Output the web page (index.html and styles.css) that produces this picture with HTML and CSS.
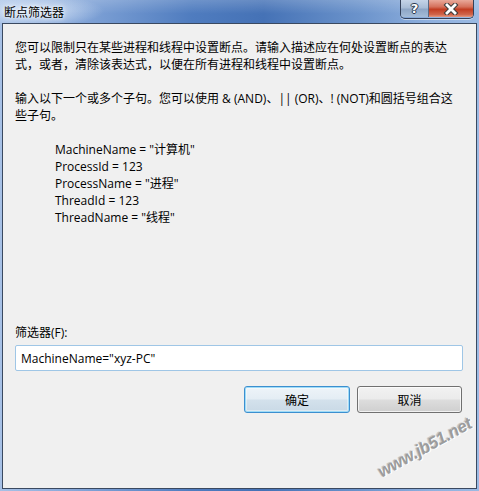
FILE: index.html
```html
<!DOCTYPE html>
<html lang="zh-CN">
<head>
<meta charset="utf-8">
<title>断点筛选器</title>
<link rel="stylesheet" href="styles.css">
</head>
<body>
<div class="window">
  <div class="titlebar">
    <span class="title">断点筛选器</span>
    <div class="caption-buttons">
      <div class="cap-btn help"><span class="qmark">?</span></div>
      <div class="cap-btn close">
        <svg width="16" height="12" viewBox="0 0 16 12">
          <path d="M4 2 L12 10 M12 2 L4 10" stroke="#3b3b3b" stroke-width="4.8" stroke-linecap="square"/>
          <path d="M4 2 L12 10 M12 2 L4 10" stroke="#ffffff" stroke-width="2.8" stroke-linecap="square"/>
        </svg>
      </div>
    </div>
  </div>
  <div class="client">
    <div class="info">
      <p class="para">您可以限制只在某些进程和线程中设置断点。请输入描述应在何处设置断点的表达<br>式，或者，清除该表达式，以便在所有进程和线程中设置断点。</p>
      <p class="para">输入以下一个或多个子句。您可以使用 &amp; (AND)、|| (OR)、! (NOT)和圆括号组合这<br>些子句。</p>
      <div class="examples">
        <div>MachineName = "计算机"</div>
        <div>ProcessId = 123</div>
        <div>ProcessName = "进程"</div>
        <div>ThreadId = 123</div>
        <div>ThreadName = "线程"</div>
      </div>
    </div>
    <label class="field-label" for="filter">筛选器(F):</label>
    <input class="field" id="filter" type="text" value='MachineName="xyz-PC"'>
    <div class="buttons">
      <button class="btn default">确定</button>
      <button class="btn">取消</button>
    </div>
    <div class="watermark">www.jb51.net</div>
  </div>
</div>
</body>
</html>
```
FILE: styles.css
```css
html, body {
  margin: 0;
  padding: 0;
}
body {
  width: 479px;
  height: 491px;
  overflow: hidden;
  font-family: "Open Sans", "Noto Sans CJK SC", sans-serif;
  font-size: 12px;
  color: #000;
}
.window {
  width: 479px;
  height: 491px;
  display: flex;
  flex-direction: column;
  box-sizing: border-box;
  background:
    linear-gradient(90deg, #a7c1e6 0%, #7fa2d6 18%, #4f7cbf 40%, #4572b6 55%, #6b93cb 75%, #8fb0de 90%, #9bbae3 100%);
}
.titlebar {
  height: 23px;
  display: flex;
  align-items: flex-start;
  position: relative;
  background:
    radial-gradient(ellipse 70px 16px at 34px 11px, rgba(225,236,250,0.85), rgba(225,236,250,0) 100%),
    linear-gradient(180deg, rgba(255,255,255,0.18) 0%, rgba(255,255,255,0) 60%);
}
.title {
  margin: 4px 0 0 4px;
  font-family: "Noto Sans CJK SC", sans-serif;
  font-size: 12px;
  line-height: 16px;
  color: #000;
  text-shadow: 0 0 6px #ffffff, 0 0 3px #eef4fc;
}
.caption-buttons {
  margin-left: auto;
  margin-right: 5px;
  display: flex;
  height: 18px;
  border: 1px solid #34415a;
  border-top: none;
  border-radius: 0 0 5px 5px;
  overflow: hidden;
  box-shadow: 0 1px 0 rgba(255,255,255,0.5);
}
.cap-btn {
  height: 17px;
  display: flex;
  align-items: center;
  justify-content: center;
}
.help {
  width: 27px;
  border-right: 1px solid #5a6a84;
  background: linear-gradient(180deg, #c5d4e8 0%, #a9bdd7 45%, #8ea6c6 55%, #a4bcd8 100%);
}
.qmark {
  font-family: "DejaVu Sans", sans-serif;
  font-weight: bold;
  font-size: 13px;
  line-height: 13px;
  color: #fff;
  text-shadow: 0 0 1px #2d3a4f, 1px 0 0 #2d3a4f, -1px 0 0 #2d3a4f, 0 1px 0 #2d3a4f, 0 -1px 0 #2d3a4f;
}
.close {
  width: 44px;
  background: linear-gradient(180deg, #e9a99a 0%, #d5715c 40%, #c23d22 55%, #d0644a 85%, #e39a82 100%);
}
.client {
  flex: 1;
  margin: 0 2px 2px 2px;
  border: 1px solid #3a4960;
  background: #f0f0f0;
  padding: 15px 13px 0 12px;
  display: flex;
  flex-direction: column;
  position: relative;
  overflow: hidden;
}
.info {
  line-height: 17px;
}
.para {
  margin: 0 0 17px 0;
  white-space: nowrap;
}
.examples {
  padding-left: 40px;
}
.field-label {
  margin-top: 98px;
  line-height: 17px;
}
.field {
  margin-top: 4px;
  height: 26px;
  box-sizing: border-box;
  width: 448px;
  border: 1px solid #9fc6e6;
  border-radius: 2px;
  background: #fff;
  padding: 0 0 0 5px;
  font-family: "Open Sans", "Noto Sans CJK SC", sans-serif;
  font-size: 12px;
  color: #000;
  outline: none;
}
.buttons {
  margin-top: 15px;
  display: flex;
  justify-content: flex-end;
  gap: 7px;
  padding-right: 1px;
}
.btn {
  height: 27px;
  box-sizing: border-box;
  font-family: "Noto Sans CJK SC", sans-serif;
  font-size: 12px;
  color: #000;
  border: 1px solid #707070;
  border-radius: 3px;
  background: linear-gradient(180deg, #f2f2f2 0%, #ebebeb 48%, #dddddd 52%, #cfcfcf 100%);
  box-shadow: inset 0 0 0 1px rgba(255,255,255,0.7);
  padding: 0;
  width: 105px;
}
.btn.default {
  width: 106px;
  border-color: #3c8fcf;
  background: linear-gradient(180deg, #eef4f9 0%, #e4edf4 48%, #d3e1ec 52%, #c9d9e6 100%);
  box-shadow: inset 0 0 0 1px #9fdcf8, inset 0 0 0 2px rgba(255,255,255,0.4);
}
.watermark {
  position: absolute;
  left: 362px;
  top: 414px;
  width: 120px;
  text-align: center;
  font-family: "Liberation Sans", sans-serif;
  font-weight: bold;
  font-style: italic;
  font-size: 17px;
  line-height: 20px;
  color: #9c9c9c;
  text-shadow: 1px 1px 0 #ffffff, -1px -1px 0 #c8c8c8;
  transform: rotate(-29deg);
  letter-spacing: -0.3px;
}
```
